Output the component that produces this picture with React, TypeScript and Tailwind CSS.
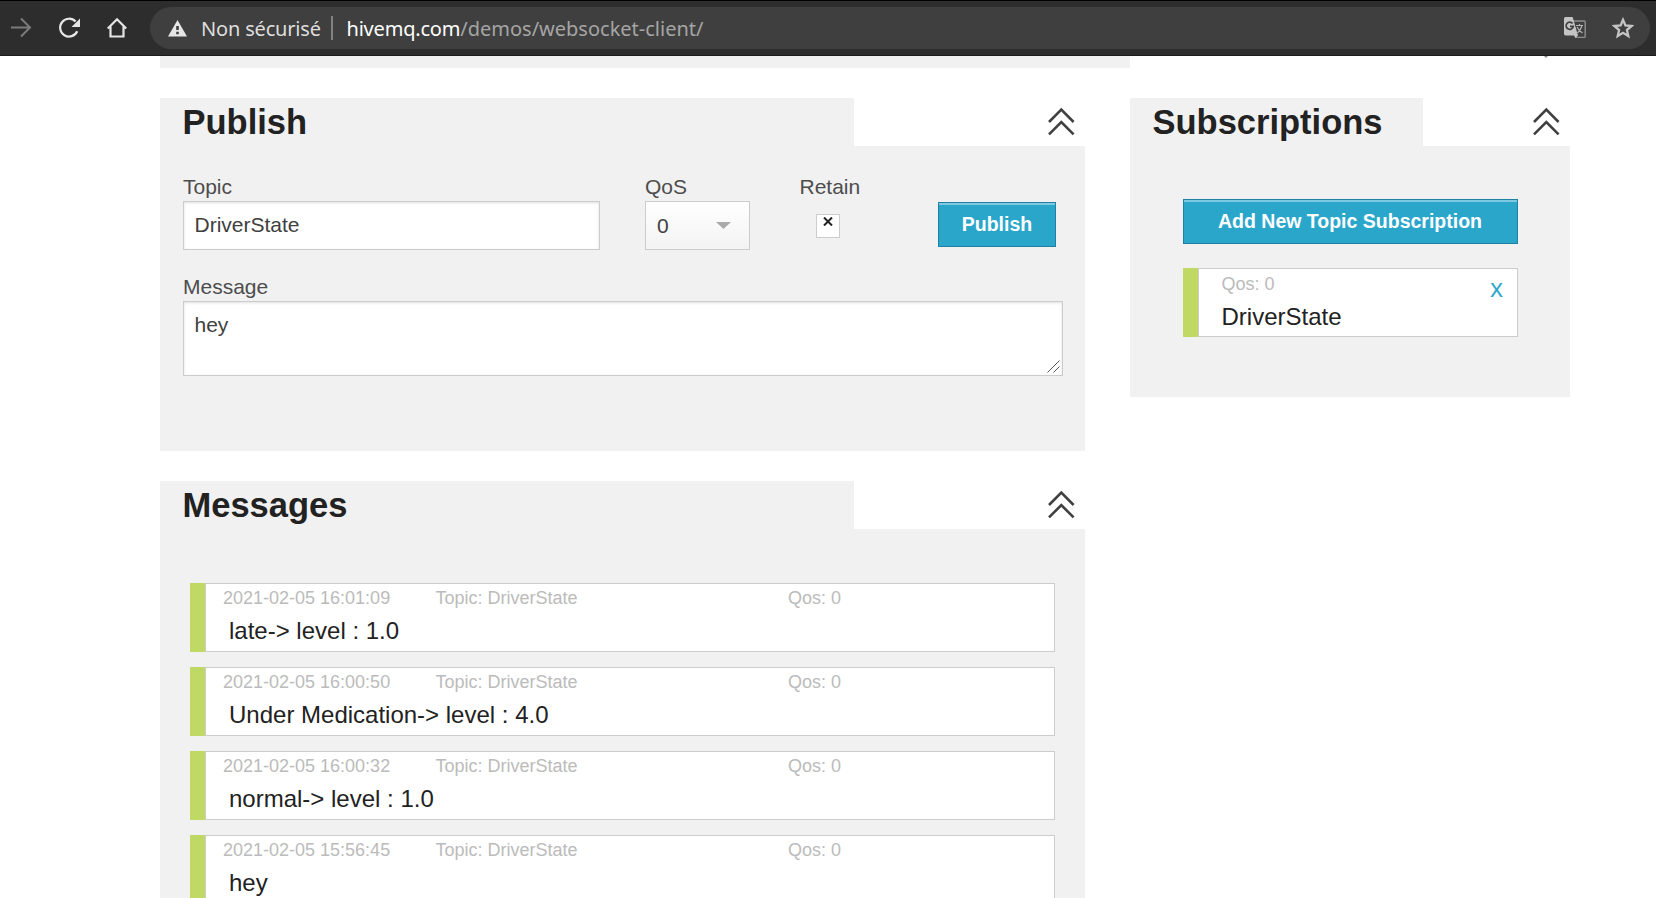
import React from "react";

function Chevrons({ className = "" }: { className?: string }) {
  return (
    <svg width="27" height="30" viewBox="0 0 27 30" fill="none" stroke="#404040" strokeWidth="2.6" className={`shrink-0 ${className}`}>
      <path d="M1 15 L13.3 2.7 L25.6 15" />
      <path d="M1 27.4 L13.3 15.1 L25.6 27.4" />
    </svg>
  );
}

function PanelHead({ title, tab, pad }: { title: string; tab: string; pad: string }) {
  return (
    <div className={`flex h-12 justify-between ${pad}`}>
      <h3 className={`bg-[#f1f1f1] pl-[22.5px] text-[34.5px] leading-[48px] font-bold text-[#222] ${tab}`}>{title}</h3>
      <Chevrons className="mt-[9px]" />
    </div>
  );
}

function TopBar() {
  return (
    <header className="flex h-14 items-center border-t border-b border-t-black border-b-[#1c1c1c] bg-[#2d2d2d] font-['Noto_Sans',sans-serif]">
      <div className="flex w-[150px] shrink-0 items-center">
        <svg width="150" height="42" viewBox="0 0 150 42" fill="none">
          <path d="M11 20.5H30M21 11.5L30 20.5L21 29.5" stroke="#7b7b7b" strokeWidth="2" />
          <path d="M77.2 24.2A8.9 8.9 0 1 1 75.6 14.6" stroke="#e6e6e6" strokeWidth="2.2" />
          <path d="M80 11.5V20H71.5Z" fill="#e6e6e6" />
          <path d="M107.8 21.5L117 12.3L126.2 21.5M110.5 19.5V29.5H123.5V19.5" stroke="#e6e6e6" strokeWidth="2.2" />
        </svg>
      </div>
      <div className="flex h-[42px] w-[1500px] items-center rounded-full bg-[#3f3f3f] pl-[18px]">
        <svg width="19" height="17" viewBox="0 0 19 17">
          <path d="M9.5 0L19 16.5H0Z" fill="#e6e6e6" />
          <path d="M8.2 6H10.8V10H8.2ZM8.2 11.8H10.8V14.2H8.2Z" fill="#3f3f3f" />
        </svg>
        <span className="ml-[14px] w-[120px] shrink-0 pt-[2px] text-[20px] leading-[40px] tracking-[-0.18px] whitespace-nowrap text-[#dedede]">Non sécurisé</span>
        <span className="ml-[10px] h-6 w-[2px] shrink-0 bg-[#838383]" />
        <span className="ml-[13.5px] pt-[2px] text-[20px] leading-[40px] whitespace-nowrap text-[#a5a5a5]">
          <span className="tracking-[-0.2px] text-white">hivemq.com</span>/demos/websocket-client/
        </span>
        <svg className="mr-[25px] ml-auto" width="23" height="22" viewBox="0 0 23 22">
          <path d="M9 4H20.2Q21.2 4 21.2 5V19.4Q21.2 20.4 20.2 20.4H12L9 4Z" fill="none" stroke="#8f8f8f" strokeWidth="1.4" />
          <path d="M1.6 0H8.6L14 18.4L11.5 21L10 18.4H1.6Q0 18.4 0 16.8V1.6Q0 0 1.6 0Z" fill="#c4c4c4" />
          <path d="M8.6 6.6A3.6 3.6 0 1 0 9.3 9.4H6" fill="none" stroke="#3f3f3f" strokeWidth="1.7" />
          <path d="M12 8.5H19M15.5 7V8.5M13 10Q15 14 18.5 16M17.8 9Q16.5 13.5 13.5 16" fill="none" stroke="#b4b4b4" strokeWidth="1.2" />
        </svg>
        <svg className="mr-4" width="22" height="22" viewBox="0 0 22 22">
          <path d="M11 2.8L13.4 8.5L19.6 9L14.9 13L16.3 19L11 15.8L5.7 19L7.1 13L2.4 9L8.6 8.5Z" fill="none" stroke="#c4c4c4" strokeWidth="2.3" />
        </svg>
      </div>
    </header>
  );
}

const fieldBox = "border border-[#ccc] bg-white text-[21px] text-[#404040] shadow-[inset_0_1px_3px_rgba(0,0,0,0.12)]";
const label = "block h-[25px] text-[21px] leading-[22px] text-[#4d4d4d]";
const button =
  "flex h-[45px] items-start justify-center border border-[#1e81a3] bg-[#2ba6cb] text-[19.5px] leading-[43px] font-bold text-white shadow-[inset_0_2px_0_rgba(255,255,255,0.4)]";

function PublishPanel() {
  return (
    <section>
      <PanelHead title="Publish" tab="w-[694px]" pad="pr-[10px]" />
      <div className="h-[305px] bg-[#f1f1f1] pt-[30px] pl-[23px]">
        <div className="flex h-[100px]">
          <div className="w-[462px]">
            <label className={label}>Topic</label>
            <div className={`h-[49px] w-[417px] pl-[10.5px] leading-[46px] ${fieldBox}`}>DriverState</div>
          </div>
          <div className="w-[154.5px]">
            <label className={label}>QoS</label>
            <div className="flex h-[49px] w-[105px] items-center justify-between border border-[#ccc] bg-linear-to-b from-white to-[#f3f3f3] pr-[18px] pl-[11px] text-[21px] text-[#404040]">
              0
              <svg width="15" height="7" viewBox="0 0 15 7">
                <path d="M0 0H15L7.5 7Z" fill="#aaa" />
              </svg>
            </div>
          </div>
          <div className="w-[138.5px]">
            <label className={label}>Retain</label>
            <div className="mt-[13px] ml-[16.5px] flex h-6 w-6 justify-center border border-[#ccc] bg-white pt-[2px]">
              <svg width="10" height="9" viewBox="0 0 10 9" stroke="#222" strokeWidth="2">
                <path d="M1 0.5L9 8.5M9 0.5L1 8.5" />
              </svg>
            </div>
          </div>
          <button className={`mt-[26px] w-[118px] ${button}`}>Publish</button>
        </div>
        <label className={label}>Message</label>
        <div className={`flex h-[75px] w-[880px] justify-between pr-[2px] pb-[2px] pl-[10.5px] leading-[46px] ${fieldBox}`}>
          hey
          <svg className="self-end" width="13" height="13" viewBox="0 0 13 13" stroke="#555" strokeWidth="1">
            <path d="M0.5 12.5L12.5 0.5M6.5 12.5L12.5 6.5" />
          </svg>
        </div>
      </div>
    </section>
  );
}

const messages = [
  { time: "2021-02-05 16:01:09", text: "late-> level : 1.0" },
  { time: "2021-02-05 16:00:50", text: "Under Medication-> level : 4.0" },
  { time: "2021-02-05 16:00:32", text: "normal-> level : 1.0" },
  { time: "2021-02-05 15:56:45", text: "hey" },
];

function MessagesPanel() {
  return (
    <section className="mt-[30px]">
      <PanelHead title="Messages" tab="w-[694px]" pad="pr-[10px]" />
      <ul className="flex h-[600px] flex-col gap-[15px] bg-[#f1f1f1] pt-[54px] pr-[30px] pl-[30px]">
        {messages.map((m) => (
          <li key={m.time} className="flex h-[69px] shrink-0">
            <div className="w-[15px] bg-[#bfd964]" />
            <div className="flex-1 border border-[#ccc] bg-white pl-[17px]">
              <div className="flex h-[28px] text-[18px] leading-[28px] text-[#bbb]">
                <span className="w-[212.5px]">{m.time}</span>
                <span className="w-[352.5px]">Topic: DriverState</span>
                <span>Qos: 0</span>
              </div>
              <div className="pl-[6px] text-[24px] leading-[38px] text-[#222]">{m.text}</div>
            </div>
          </li>
        ))}
      </ul>
    </section>
  );
}

function SubscriptionsPanel() {
  return (
    <section className="w-[440px]">
      <PanelHead title="Subscriptions" tab="w-[293px]" pad="pr-[10px]" />
      <div className="h-[251px] bg-[#f1f1f1] pt-[53px] pr-[52px] pl-[53px]">
        <button className={`w-full pr-px ${button}`}>Add New Topic Subscription</button>
        <div className="mt-6 flex h-[69px]">
          <div className="w-[15px] bg-[#bfd964]" />
          <div className="flex flex-1 justify-between border border-[#ccc] bg-white pr-[14px] pl-[22.5px]">
            <div>
              <div className="h-[28px] text-[18px] leading-[30px] text-[#bbb]">Qos: 0</div>
              <div className="text-[24px] leading-[39px] text-[#222]">DriverState</div>
            </div>
            <a className="pt-[5px] font-['Open_Sans',sans-serif] text-[25px] leading-[26px] font-medium text-[#2ba6cb]">x</a>
          </div>
        </div>
      </div>
    </section>
  );
}

export default function App() {
  return (
    <div className="h-[898px] w-[1656px] overflow-hidden bg-white font-['Liberation_Sans',Arial,sans-serif]">
      <TopBar />
      <div className="flex h-[42px] items-start pl-[160px]">
        <div className="h-3 w-[970px] bg-[#f1f1f1]" />
        <svg className="ml-[414px]" width="4" height="2" viewBox="0 0 4 2">
          <path d="M0 0H4L2 2Z" fill="#888" />
        </svg>
      </div>
      <main className="flex items-start gap-[45px] pl-[160px]">
        <div className="w-[925px]">
          <PublishPanel />
          <MessagesPanel />
        </div>
        <SubscriptionsPanel />
      </main>
    </div>
  );
}
